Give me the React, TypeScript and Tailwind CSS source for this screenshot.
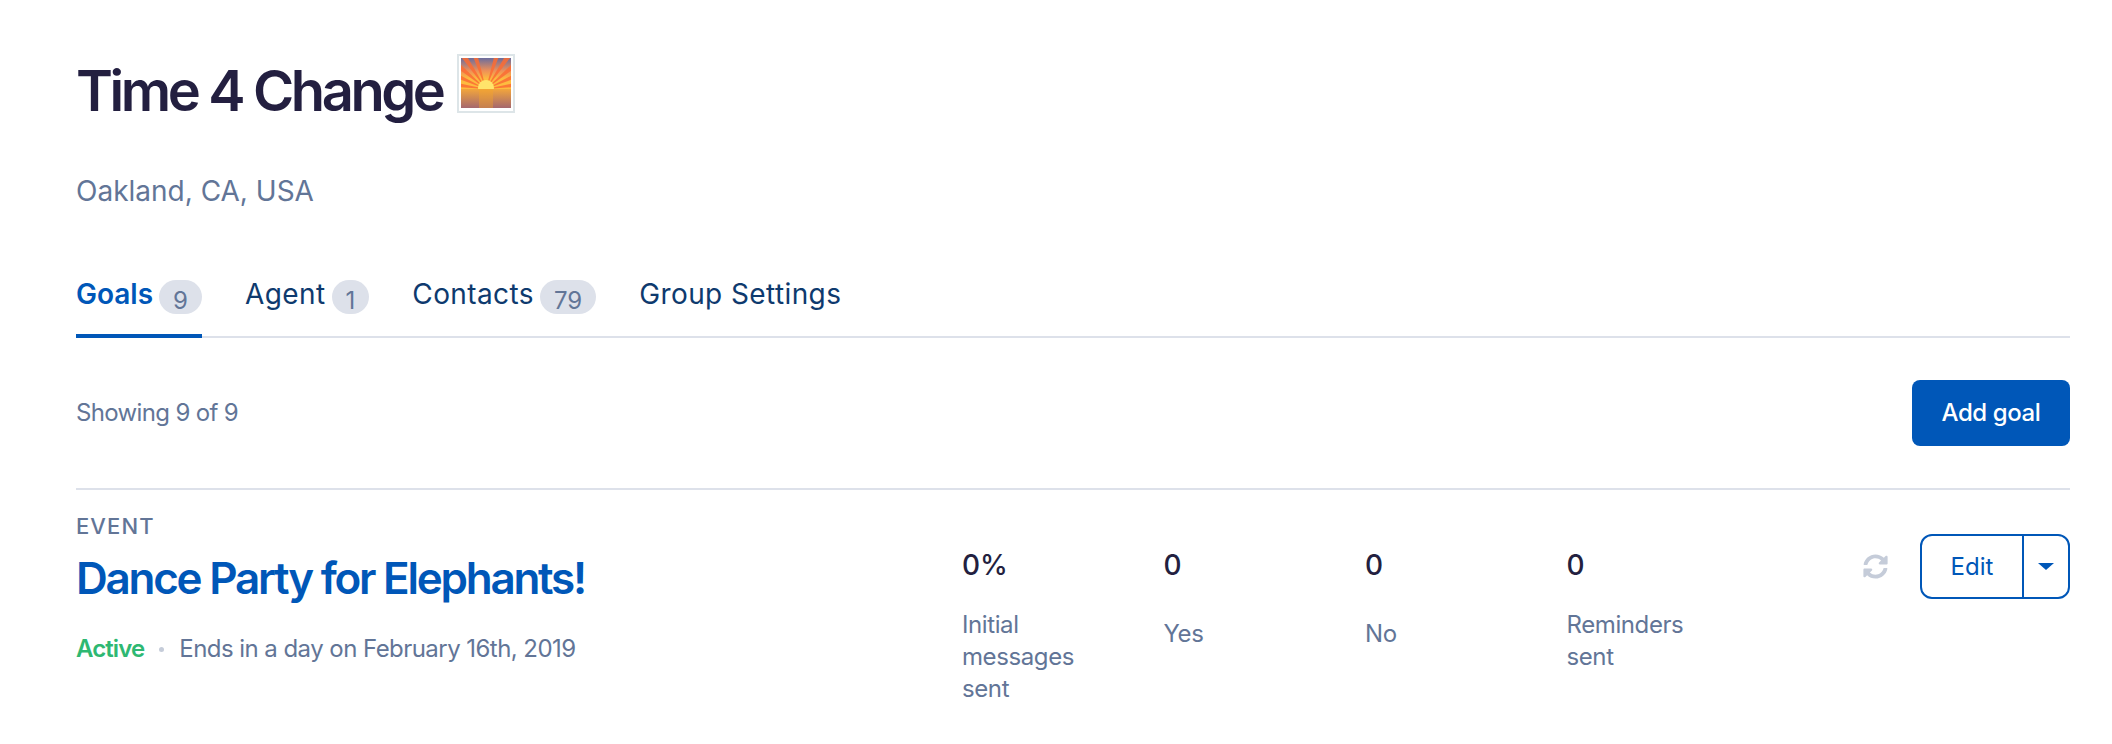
import React from 'react'
import { FaSyncAlt } from 'react-icons/fa'

const tabs = [
  { label: 'Goals', count: '9', active: true },
  { label: 'Agent', count: '1', active: false },
  { label: 'Contacts', count: '79', active: false },
  { label: 'Group Settings', count: null, active: false },
]

const stats = [
  { value: '0%', label: 'Initial messages sent', offset: false },
  { value: '0', label: 'Yes', offset: true },
  { value: '0', label: 'No', offset: true },
  { value: '0', label: 'Reminders sent', offset: false },
]

function SunsetEmoji() {
  const rays = [-82, -66, -50, -34, -18, 18, 34, 50, 66, 82]
  return (
    <svg viewBox="0 0 50 50" className="block w-[50px] h-[50px]">
      <defs>
        <linearGradient id="sky" x1="0" y1="0" x2="0" y2="1">
          <stop offset="0" stopColor="#6a6d9e" />
          <stop offset="0.4" stopColor="#ee9058" />
          <stop offset="0.65" stopColor="#fdbb3f" />
        </linearGradient>
        <linearGradient id="sea" x1="0" y1="0" x2="0" y2="1">
          <stop offset="0" stopColor="#f2a53c" />
          <stop offset="1" stopColor="#a5686e" />
        </linearGradient>
      </defs>
      <rect width="50" height="32" fill="url(#sky)" />
      {rays.map(r => (
        <path key={r} d="M25 31 L22 -14 L28 -14 Z" fill="#fa6c34" opacity="0.85" transform={`rotate(${r} 25 31)`} />
      ))}
      <circle cx="25" cy="30" r="8" fill="#ffe46b" />
      <rect y="31" width="50" height="19" fill="url(#sea)" />
      <rect x="18" y="31" width="14" height="19" fill="#f6a528" opacity="0.4" />
    </svg>
  )
}

export default function App() {
  return (
    <div className="h-[744px] bg-white pl-[76px] pr-[42px] font-[Inter,sans-serif] overflow-hidden">

      {/* Group header */}
      <div className="flex items-start pt-[57px] h-[171px]">
        <h1 className="text-[56px] leading-[68px] font-semibold tracking-[-3.4px] text-[#231f40]">Time 4 Change</h1>
        <div className="ml-[14px] -mt-[3px] h-[59px] border-2 border-[#dde5e8] p-0.5">
          <SunsetEmoji />
        </div>
      </div>
      <p className="text-[28px] leading-[40px] text-[#627597]">Oakland, CA, USA</p>

      {/* Tabs */}
      <div className="flex gap-[43px] mt-[37px] h-[90px] border-b-2 border-[#dde1ea]">
        {tabs.map(t => (
          <div
            key={t.label}
            className={`flex items-start pt-[24px] h-[90px] ${t.active ? 'border-b-4 border-[#0057b8]' : ''}`}
          >
            <span className={`text-[28px] leading-[44px] ${t.active ? 'font-semibold text-[#0057b8]' : 'tracking-[0.4px] text-[#0e3a6e]'}`}>{t.label}</span>
            {t.count && (
              <span className="ml-[6px] mt-[8px] h-[34px] px-[14px] rounded-[17px] bg-[#dde1ea] text-[#627597] text-[24px] leading-[42px]">{t.count}</span>
            )}
          </div>
        ))}
      </div>

      {/* Toolbar */}
      <div className="flex items-center justify-between h-[152px] border-b-2 border-[#dde1ea]">
        <span className="text-[24px] tracking-[-0.65px] text-[#627597]">Showing 9 of 9</span>
        <button className="w-[158px] h-[66px] rounded-lg bg-[#0057b8] text-white text-[24px] font-medium tracking-[-0.4px]">Add goal</button>
      </div>

      {/* Goal row */}
      <div className="flex items-start">
        <div className="w-[886px] pt-[22px]">
          <div className="text-[22px] leading-[28px] font-medium tracking-[1.1px] text-[#627597]">EVENT</div>
          <h2 className="mt-[10px] text-[44px] leading-[56px] font-semibold tracking-[-2.25px] text-[#0057b8]">Dance Party for Elephants!</h2>
          <div className="flex items-center mt-[25px] text-[24px] leading-[36px]">
            <span className="font-semibold tracking-[-0.9px] text-[#2eb872]">Active</span>
            <span className="mx-[15px] w-[5px] h-[5px] rounded-full bg-[#c5ccd9]"></span>
            <span className="tracking-[-0.55px] text-[#627597]">Ends in a day on February 16th, 2019</span>
          </div>
        </div>

        <div className="flex pt-[55px]">
          {stats.map((s, i) => (
            <div key={i} className="w-[201.5px]">
              <div className="text-[28px] leading-[40px] font-medium text-[#231f40]">{s.value}</div>
              <div className={`w-[120px] text-[24px] leading-[32px] tracking-[-0.4px] text-[#627597] ${s.offset ? 'mt-[33px]' : 'mt-[24px]'}`}>{s.label}</div>
            </div>
          ))}
        </div>

        <div className="flex items-center ml-auto mt-[44px]">
          <FaSyncAlt className="w-[25px] h-[25px] text-[#c5ccd9] mr-[32px]" />
          <div className="flex w-[150px] h-[65px] rounded-[12px] border-2 border-[#0057b8] text-[#0057b8]">
            <span className="w-[102px] flex items-center justify-center text-[24px] border-r-2 border-[#0057b8]">Edit</span>
            <span className="flex-1 flex items-center justify-center">
              <span className="w-0 h-0 border-x-[8px] border-x-transparent border-t-[7px] border-t-[#0057b8]"></span>
            </span>
          </div>
        </div>
      </div>

    </div>
  )
}
